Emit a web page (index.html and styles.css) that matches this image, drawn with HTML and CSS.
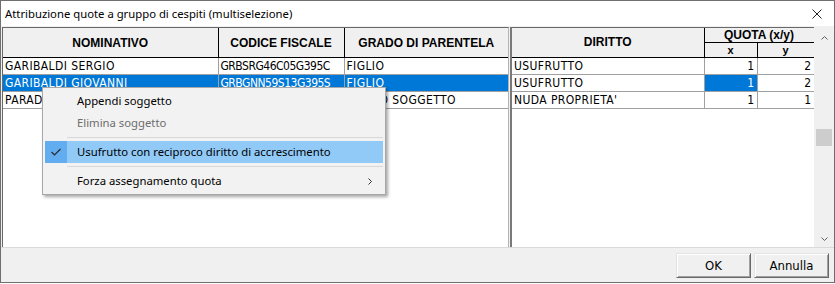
FILE: index.html
```html
<!DOCTYPE html>
<html lang="it">
<head>
    <meta charset="UTF-8">
    <title>Attribuzione quote</title>
    <link rel="stylesheet" href="styles.css">
</head>
<body>
    <div class="window">
        <div class="titlebar">
            <span class="title">Attribuzione quote a gruppo di cespiti (multiselezione)</span>
            <svg class="close" width="10" height="10" viewBox="0 0 10 10">
                <path d="M0.5 0.5 L9.5 9.5 M9.5 0.5 L0.5 9.5" stroke="#222" stroke-width="1" fill="none"/>
            </svg>
        </div>

        <div class="client">
            <div class="grid grid-left">
                <table class="table-left">
                    <colgroup>
                        <col style="width:215px">
                        <col style="width:126px">
                        <col style="width:164px">
                    </colgroup>
                    <thead>
                        <tr class="head-row">
                            <th>NOMINATIVO</th>
                            <th>CODICE FISCALE</th>
                            <th class="last">GRADO DI PARENTELA</th>
                        </tr>
                    </thead>
                    <tbody>
                        <tr>
                            <td>GARIBALDI SERGIO</td>
                            <td class="cf">GRBSRG46C05G395C</td>
                            <td class="last">FIGLIO</td>
                        </tr>
                        <tr class="selected">
                            <td>GARIBALDI GIOVANNI</td>
                            <td class="cf">GRBGNN59S13G395S</td>
                            <td class="last">FIGLIO</td>
                        </tr>
                        <tr>
                            <td>PARADISI MARIA</td>
                            <td class="cf">PRDMRA31A41G395K</td>
                            <td class="last">NUOVO SOGGETTO</td>
                        </tr>
                    </tbody>
                </table>
            </div>

            <div class="grid grid-right">
                <table class="table-right">
                    <colgroup>
                        <col style="width:192px">
                        <col style="width:53px">
                        <col style="width:57px">
                    </colgroup>
                    <thead>
                        <tr class="head-top">
                            <th rowspan="2">DIRITTO</th>
                            <th colspan="2">QUOTA (x/y)</th>
                        </tr>
                        <tr class="head-sub">
                            <th>x</th>
                            <th>y</th>
                        </tr>
                    </thead>
                    <tbody>
                        <tr>
                            <td>USUFRUTTO</td>
                            <td class="num">1</td>
                            <td class="num">2</td>
                        </tr>
                        <tr>
                            <td>USUFRUTTO</td>
                            <td class="num current">1</td>
                            <td class="num">2</td>
                        </tr>
                        <tr>
                            <td>NUDA PROPRIETA'</td>
                            <td class="num">1</td>
                            <td class="num">1</td>
                        </tr>
                    </tbody>
                </table>
            </div>

            <div class="scrollbar">
                <svg class="arrow" width="7" height="4" viewBox="0 0 7 4">
                    <path d="M0.5 3.5 L3.5 0.5 L6.5 3.5" stroke="#606060" fill="none"/>
                </svg>
                <div class="track">
                    <div class="thumb"></div>
                </div>
                <svg class="arrow" width="7" height="4" viewBox="0 0 7 4">
                    <path d="M0.5 0.5 L3.5 3.5 L6.5 0.5" stroke="#606060" fill="none"/>
                </svg>
            </div>
        </div>

        <div class="footer">
            <button class="btn">OK</button>
            <button class="btn">Annulla</button>
        </div>

        <div class="menu">
            <div class="menu-item">Appendi soggetto</div>
            <div class="menu-item disabled">Elimina soggetto</div>
            <div class="menu-sep"></div>
            <div class="menu-item hover">
                <span class="check">
                    <svg width="10" height="8" viewBox="0 0 10 8">
                        <path d="M0.5 4 L3.5 7 L9.5 1" stroke="#2b2b2b" stroke-width="1.2" fill="none"/>
                    </svg>
                </span>
                Usufrutto con reciproco diritto di accrescimento
            </div>
            <div class="menu-sep"></div>
            <div class="menu-item">
                Forza assegnamento quota
                <svg class="sub" width="4" height="7" viewBox="0 0 4 7">
                    <path d="M0.5 0.5 L3.5 3.5 L0.5 6.5" stroke="#333" fill="none"/>
                </svg>
            </div>
        </div>
    </div>
</body>
</html>
```

FILE: styles.css
```css
body {
    margin: 0;
    background-color: #fff;
    font-family: "Noto Sans", sans-serif;
    font-size: 12px;
    color: #000;
}
.window {
    position: relative;
    width: 835px;
    height: 283px;
    box-sizing: border-box;
    border: 1px solid #6f6f6f;
    background-color: #f0f0f0;
    display: flex;
    flex-direction: column;
}
.titlebar {
    height: 25px;
    background-color: #fff;
    display: flex;
    align-items: center;
    justify-content: space-between;
    padding: 0 12px 0 4px;
}
.title {
    font-family: "Noto Sans", sans-serif;
    font-size: 11.3px;
    color: #000;
}
.client {
    height: 221px;
    box-sizing: border-box;
    padding: 1px 0 0 1px;
    display: flex;
}
.grid {
    background-color: #fff;
    border-top: 1px solid #696969;
    overflow: hidden;
}
.grid-left {
    width: 507px;
    box-sizing: border-box;
    border-left: 1px solid #696969;
    border-right: 1px solid #b4b4b4;
    margin-right: 1px;
}
.grid-right {
    width: 304px;
    box-sizing: border-box;
    border-left: 2px solid #7a7a7a;
}
table {
    border-collapse: collapse;
    table-layout: fixed;
}
.table-left {
    width: 505px;
}
.table-right {
    width: 302px;
}
th {
    background-color: #f0f0f0;
    font-family: "Liberation Sans", sans-serif;
    font-weight: bold;
    font-size: 12px;
    border-right: 1px solid #000;
    border-bottom: 1px solid #000;
    padding: 0;
}
th.last, td.last {
    border-right: none;
}
.head-row th {
    height: 29px;
}
.head-top th {
    height: 14px;
    line-height: 13px;
}
.head-sub th {
    height: 14px;
    font-size: 11px;
    line-height: 12px;
}
td {
    height: 16px;
    padding: 0 2px;
    border-right: 1px solid #a0a0a0;
    border-bottom: 1px solid #a0a0a0;
    white-space: nowrap;
    overflow: hidden;
    line-height: 16px;
    font-family: "DejaVu Sans Condensed", "Liberation Sans", sans-serif;
    font-size: 12px;
    letter-spacing: 0.4px;
}
td.cf {
    letter-spacing: -0.5px;
}
td.num {
    text-align: right;
}
.selected td, td.current {
    background-color: #0078d7;
    color: #fff;
}
.scrollbar {
    width: 20px;
    display: flex;
    flex-direction: column;
    align-items: center;
    padding: 9px 0 6px;
    box-sizing: border-box;
}
.track {
    flex: 1;
    width: 100%;
    padding-top: 89px;
    box-sizing: border-box;
}
.thumb {
    width: 16px;
    height: 17px;
    margin-left: 2px;
    background-color: #cdcdcd;
}
.footer {
    flex: 1;
    border-top: 1px solid #dadada;
    display: flex;
    justify-content: flex-end;
    align-items: flex-start;
    gap: 3px;
    padding: 5px 5px 0 0;
}
.btn {
    width: 75px;
    height: 25px;
    background-color: #f0f0f0;
    border: 1px solid;
    border-color: #e3e3e3 #696969 #696969 #e3e3e3;
    box-shadow: inset 1px 1px #fff, inset -1px -1px #a0a0a0;
    font-family: "DejaVu Sans Condensed", "Liberation Sans", sans-serif;
    font-size: 13px;
    color: #000;
    padding: 0;
}
.menu {
    position: absolute;
    left: 41px;
    top: 86px;
    width: 344px;
    box-sizing: border-box;
    border: 1px solid #a8a8a8;
    background-color: #f2f2f2;
    padding: 2px;
    box-shadow: 2px 2px 3px rgba(0, 0, 0, 0.35);
    font-family: "Noto Sans", sans-serif;
    font-size: 11.3px;
}
.menu-item {
    position: relative;
    height: 22px;
    line-height: 22px;
    padding-left: 32px;
    color: #000;
}
.menu-item.disabled {
    color: #6d6d6d;
}
.menu-item.hover {
    background-color: #91c9f7;
}
.check {
    position: absolute;
    left: 0;
    top: 0;
    width: 22px;
    height: 22px;
    background-color: #62adf0;
    display: flex;
    align-items: center;
    justify-content: center;
}
.menu-sep {
    height: 7px;
    margin-left: 22px;
    position: relative;
}
.menu-sep::after {
    content: "";
    position: absolute;
    left: 0;
    right: 0;
    top: 3px;
    height: 1px;
    background-color: #d7d7d7;
}
.sub {
    position: absolute;
    right: 11px;
    top: 8px;
}
```
